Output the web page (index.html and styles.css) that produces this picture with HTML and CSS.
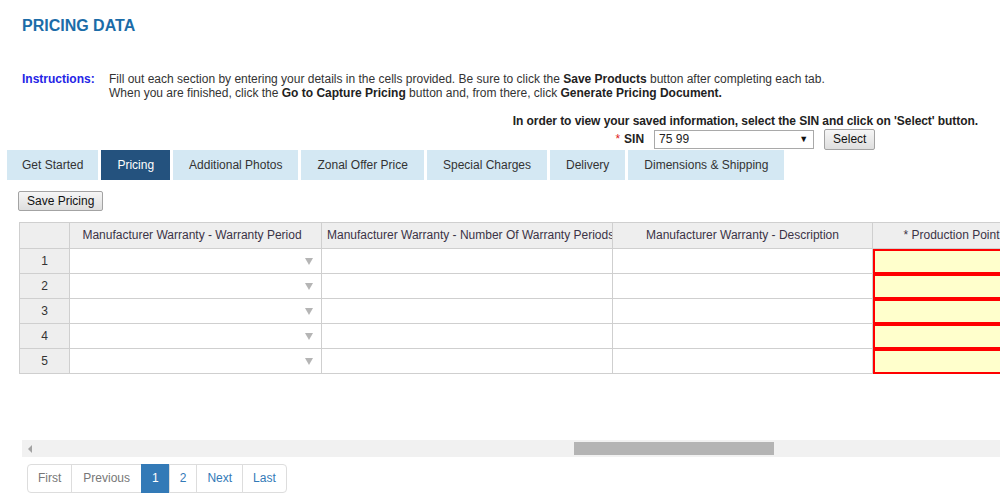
FILE: index.html
```html
<!DOCTYPE html>
<html lang="en">
<head>
<meta charset="utf-8">
<title>Pricing Data</title>
<link rel="stylesheet" href="styles.css">
</head>
<body>
<h1 class="title">PRICING DATA</h1>

<div class="instructions">
  <div class="instructions-label">Instructions:</div>
  <div class="instructions-text">
    <div>Fill out each section by entering your details in the cells provided. Be sure to click the <b>Save Products</b> button after completing each tab.</div>
    <div>When you are finished, click the <b>Go to Capture Pricing</b> button and, from there, click <b>Generate Pricing Document.</b></div>
  </div>
</div>

<div class="sin-box">
  <div class="sin-note">In order to view your saved information, select the SIN and click on 'Select' button.</div>
  <div class="sin-row">
    <span class="req-star">*</span>
    <span class="sin-label">SIN</span>
    <span class="sin-select"><span class="sin-value">75 99</span><span class="sin-caret">&#9660;</span></span>
    <button class="btn sin-btn" type="button">Select</button>
  </div>
</div>

<nav class="tabs">
  <a class="tab">Get Started</a>
  <a class="tab tab-active">Pricing</a>
  <a class="tab">Additional Photos</a>
  <a class="tab">Zonal Offer Price</a>
  <a class="tab">Special Charges</a>
  <a class="tab">Delivery</a>
  <a class="tab">Dimensions &amp; Shipping</a>
</nav>

<button class="btn save-btn" type="button">Save Pricing</button>

<div class="grid-wrap">
  <div class="grid">
    <div class="hc"></div>
    <div class="hc hc-first">Manufacturer Warranty - Warranty Period</div>
    <div class="hc">Manufacturer Warranty - Number Of Warranty Periods</div>
    <div class="hc">Manufacturer Warranty - Description</div>
    <div class="hc">* Production Point of Contact</div>
    <div class="hc">Production Point of Contact Phone</div>

    <div class="rn">1</div><div class="c dd"><span class="dd-arrow"></span></div><div class="c"></div><div class="c"></div><div class="c req"></div><div class="c"></div>
    <div class="rn">2</div><div class="c dd"><span class="dd-arrow"></span></div><div class="c"></div><div class="c"></div><div class="c req"></div><div class="c"></div>
    <div class="rn">3</div><div class="c dd"><span class="dd-arrow"></span></div><div class="c"></div><div class="c"></div><div class="c req"></div><div class="c"></div>
    <div class="rn">4</div><div class="c dd"><span class="dd-arrow"></span></div><div class="c"></div><div class="c"></div><div class="c req"></div><div class="c"></div>
    <div class="rn">5</div><div class="c dd"><span class="dd-arrow"></span></div><div class="c"></div><div class="c"></div><div class="c req"></div><div class="c"></div>
  </div>
</div>

<div class="hscroll">
  <span class="hscroll-arrow"></span>
  <span class="hscroll-thumb"></span>
</div>

<ul class="pager">
  <li class="pg pg-dis">First</li>
  <li class="pg pg-dis pg-prev">Previous</li>
  <li class="pg pg-active">1</li>
  <li class="pg">2</li>
  <li class="pg">Next</li>
  <li class="pg">Last</li>
</ul>
</body>
</html>
```
FILE: styles.css
```css
* { box-sizing: border-box; }

html, body {
  margin: 0;
  background: #fff;
  overflow: hidden;
}

body {
  font-family: "Liberation Sans", Arial, sans-serif;
  font-size: 12px;
  color: #333;
  width: 1000px;
  height: 500px;
}

.title {
  margin: 0;
  padding: 17px 22px 0;
  font-size: 16px;
  line-height: 18px;
  font-weight: bold;
  color: #1b6ca8;
}

.instructions {
  display: flex;
  margin-top: 37px;
  padding-left: 22px;
  line-height: 14px;
}

.instructions-label {
  width: 87px;
  flex: none;
  font-weight: bold;
  color: #2424e6;
}

.instructions-text b { color: #222; }

.sin-box {
  width: max-content;
  margin: 14px 22px 0 auto;
  text-align: center;
}

.sin-note {
  font-weight: bold;
  color: #222;
  line-height: 14px;
  white-space: nowrap;
  letter-spacing: -0.07px;
}

.sin-row {
  display: flex;
  align-items: center;
  justify-content: center;
  height: 22px;
}

.req-star { color: #e02020; margin-right: 4px; }

.sin-label { font-weight: bold; color: #222; margin-right: 10px; }

.sin-select {
  display: flex;
  align-items: center;
  justify-content: space-between;
  width: 160px;
  height: 19px;
  padding: 0 5px 0 4px;
  border: 1px solid #a9a9a9;
  background: #fff;
  color: #222;
  font-size: 12px;
}

.sin-caret { font-size: 9px; color: #111; }

.btn {
  font-family: inherit;
  font-size: 12px;
  color: #111;
  background: linear-gradient(#f6f6f6, #dedede);
  border: 1px solid #a3a3a3;
  border-radius: 2px;
  padding: 0 8px;
  cursor: pointer;
}

.sin-btn {
  height: 21px;
  margin-left: 10px;
  padding: 0 8px;
}

.tabs {
  display: flex;
  gap: 3px;
  padding-left: 7px;
}

.tab {
  display: block;
  height: 30px;
  line-height: 30px;
  padding: 0 16px;
  background: #d4e8f3;
  color: #333;
  font-size: 12px;
}

.tab:first-child { padding: 0 15px; }

.tab-active {
  background: #24527e;
  color: #fff;
}

.save-btn {
  display: block;
  height: 20px;
  margin: 11px 0 0 18px;
  padding: 0 8px;
}

.grid-wrap {
  margin: 11px 0 0 19px;
  height: 218px;
  overflow: hidden;
}

.grid {
  display: grid;
  width: max-content;
  grid-template-columns: 50px 252px 291px 260px 216px 260px;
  grid-auto-rows: 25px;
  grid-template-rows: 26px;
  border-top: 1px solid #cfcfcf;
  border-left: 1px solid #cfcfcf;
}

.hc, .rn, .c {
  border-right: 1px solid #cfcfcf;
  border-bottom: 1px solid #cfcfcf;
}

.hc {
  background: #eeeeee;
  line-height: 25px;
  padding: 0 5px;
  text-align: center;
  white-space: nowrap;
  overflow: hidden;
  color: #3b3346;
}

.hc-first { padding-right: 12px; }

.rn {
  background: #eeeeee;
  text-align: center;
  line-height: 24px;
  color: #333;
}

.c { background: #fff; }

.dd {
  display: flex;
  align-items: center;
  justify-content: flex-end;
  padding-right: 8px;
}

.dd-arrow {
  width: 0;
  height: 0;
  border-left: 4px solid transparent;
  border-right: 4px solid transparent;
  border-top: 7px solid #b5b5b5;
}

.req {
  background: #ffffcc;
  border-right-color: #ff0000;
  border-bottom-color: #ff0000;
  box-shadow: inset 2px 2px 0 0 #ff0000, inset -1px -1px 0 0 #ff0000;
}

.hscroll {
  display: flex;
  align-items: center;
  margin-left: 22px;
  height: 17px;
  background: #f1f1f1;
}

.hscroll-arrow {
  width: 0;
  height: 0;
  margin-left: 6px;
  border-top: 4px solid transparent;
  border-bottom: 4px solid transparent;
  border-right: 4px solid #a3a3a3;
}

.hscroll-thumb {
  width: 200px;
  height: 13px;
  margin-left: 542px;
  background: #b4b4b4;
}

.pager {
  display: flex;
  list-style: none;
  margin: 7px 0 0 27px;
  padding: 0;
}

.pg {
  height: 29px;
  line-height: 27px;
  padding: 0 10px;
  border: 1px solid #dddddd;
  margin-left: -1px;
  color: #337ab7;
  font-size: 12px;
  background: #fff;
}

.pg:first-child {
  margin-left: 0;
  border-radius: 4px 0 0 4px;
}

.pg:last-child { border-radius: 0 4px 4px 0; }

.pg-dis { color: #777; }

.pg-prev { padding: 0 11px; }

.pg-active {
  background: #337ab7;
  border-color: #337ab7;
  color: #fff;
  padding: 0 10px;
}
```
